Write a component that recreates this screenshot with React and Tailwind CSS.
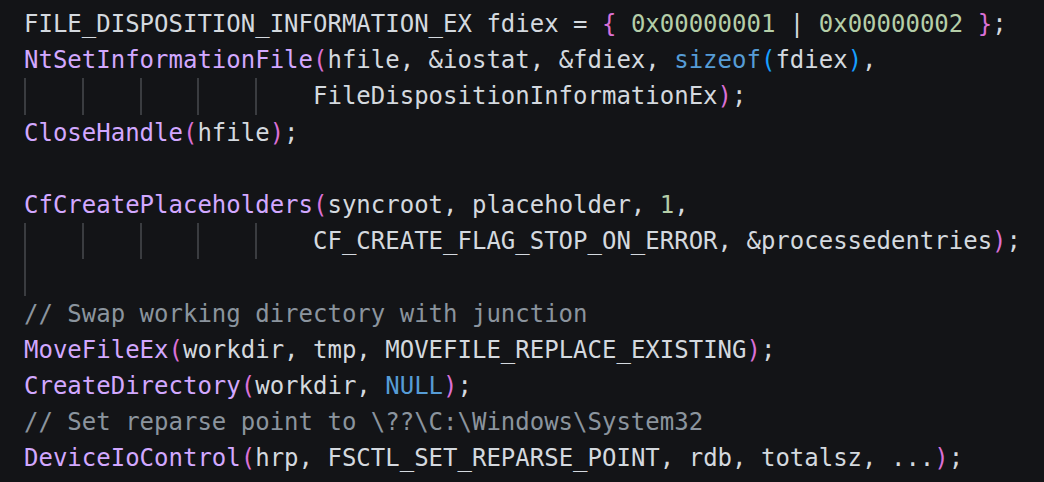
const C = {
  fn: 'text-[#d2a8ff]',
  p1: 'text-[#da70d6]',
  p2: 'text-[#179fff]',
  num: 'text-[#b5cea8]',
  kw: 'text-[#569cd6]',
  cm: 'text-[#8b949e]',
};

// each line: [indent guides, tokens]; a token is plain text or [text, colour class]
const LINES = [
  [0, ['FILE_DISPOSITION_INFORMATION_EX fdiex = ', ['{', C.p1], ' ', ['0x00000001', C.num], ' | ', ['0x00000002', C.num], ' ', ['}', C.p1], ';']],
  [0, [['NtSetInformationFile', C.fn], ['(', C.p1], 'hfile, &iostat, &fdiex, ', ['sizeof', C.kw], ['(', C.p2], 'fdiex', [')', C.p2], ',']],
  [5, ['FileDispositionInformationEx', [')', C.p1], ';']],
  [0, [['CloseHandle', C.fn], ['(', C.p1], 'hfile', [')', C.p1], ';']],
  [0, []],
  [0, [['CfCreatePlaceholders', C.fn], ['(', C.p1], 'syncroot, placeholder, ', ['1', C.num], ',']],
  [5, ['CF_CREATE_FLAG_STOP_ON_ERROR, &processedentries', [')', C.p1], ';']],
  [1, []],
  [0, [['// Swap working directory with junction', C.cm]]],
  [0, [['MoveFileEx', C.fn], ['(', C.p1], 'workdir, tmp, MOVEFILE_REPLACE_EXISTING', [')', C.p1], ';']],
  [0, [['CreateDirectory', C.fn], ['(', C.p1], 'workdir, ', ['NULL', C.kw], [')', C.p1], ';']],
  [0, [['// Set reparse point to \\??\\C:\\Windows\\System32', C.cm]]],
  [0, [['DeviceIoControl', C.fn], ['(', C.p1], 'hrp, FSCTL_SET_REPARSE_POINT, rdb, totalsz, ...', [')', C.p1], ';']],
];

export default function App() {
  return (
    <div className="w-[1044px] h-[482px] overflow-hidden bg-[#131417] pl-[24px] pt-[6px] font-['DejaVu_Sans_Mono',monospace] text-[24px] text-[#d4d9df]">
      {LINES.map(([guides, tokens], i) => (
        <div key={i} className="flex h-[36.2px] items-center whitespace-pre leading-[36.2px]">
          {Array.from({ length: guides }).map((_, g) => (
            <span key={g} className="inline-block h-full w-[4ch] shrink-0 border-l-2 border-[#3a3c40]" />
          ))}
          {tokens.map((t, j) =>
            typeof t === 'string' ? (
              <span key={j}>{t}</span>
            ) : (
              <span key={j} className={t[1]}>
                {t[0]}
              </span>
            )
          )}
        </div>
      ))}
    </div>
  );
}
